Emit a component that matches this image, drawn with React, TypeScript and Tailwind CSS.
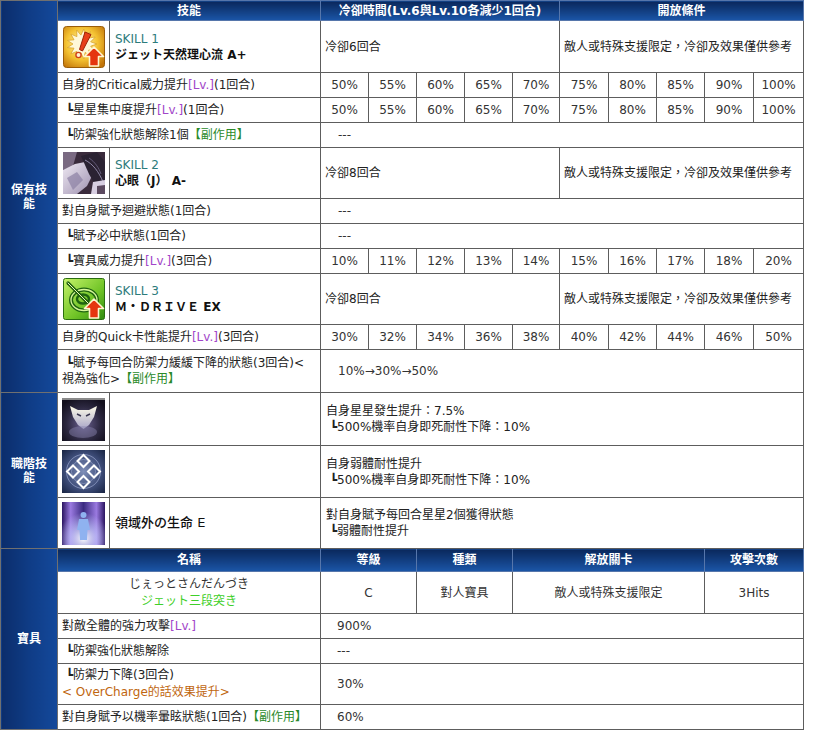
import React from "react";

const cell = "border border-[#5d5d5d] bg-white";
const hd =
  "border border-[#5676ab] bg-linear-to-b from-[#0a285c] to-[#1b56a8] text-white font-bold text-center";
const side =
  "border border-[#707070] bg-linear-to-r from-[#0b2d6b] via-[#0f3c86] to-[#14499b] text-white font-bold text-center leading-[14px]";

const Lv = () => <span className="text-[#a246c9]">[Lv.]</span>;
const Side = () => <span className="text-[#2a8a2a]">【副作用】</span>;

const burst = Array.from({ length: 26 }, (_, i) => {
  const a = (i / 26) * Math.PI * 2;
  const r = i % 2 ? 9 : 15;
  return `${(19 + r * Math.cos(a)).toFixed(1)},${(18 + r * Math.sin(a)).toFixed(1)}`;
}).join(" ");

const Arrow = () => (
  <polygon
    points="31,21 40.5,30.5 35.5,30.5 35.5,40 26.5,40 26.5,30.5 21.5,30.5"
    fill="#e5360f"
    stroke="#fff6d0"
    strokeWidth="1.6"
    strokeLinejoin="round"
  />
);

const Icon1 = () => (
  <svg width="42" height="42" viewBox="0 0 42 42">
    <defs>
      <radialGradient id="g1" cx="45%" cy="42%" r="70%">
        <stop offset="0" stopColor="#fff6b8" />
        <stop offset="0.55" stopColor="#f4c232" />
        <stop offset="1" stopColor="#c27408" />
      </radialGradient>
    </defs>
    <rect x="0.5" y="0.5" width="41" height="41" rx="3" fill="url(#g1)" stroke="#9a5c08" />
    <polygon points={burst} fill="#fff8d8" stroke="#d9a52a" strokeWidth="0.8" />
    <polygon points="22,6 28,8.5 19.5,25 16.5,23.5" fill="#e8401a" stroke="#9b2208" strokeWidth="1" />
    <circle cx="15.5" cy="29" r="2.6" fill="#fff0d0" stroke="#d0401a" strokeWidth="1.4" />
    <Arrow />
  </svg>
);

const Icon2 = () => (
  <svg width="42" height="42" viewBox="0 0 42 42">
    <defs>
      <linearGradient id="g2" x1="0" y1="0" x2="1" y2="1">
        <stop offset="0" stopColor="#efe9f3" />
        <stop offset="1" stopColor="#9c8fae" />
      </linearGradient>
    </defs>
    <rect width="42" height="42" fill="#3a2b3c" />
    <polygon points="0,0 14,0 10,14 0,18" fill="#7a6a82" />
    <polygon points="0,18 12,12 22,10 30,22 24,34 14,42 0,42" fill="url(#g2)" />
    <polygon points="4,26 14,20 20,28 10,38" fill="#8c80a4" opacity="0.7" />
    <polygon points="18,4 34,0 42,10 42,30 34,36 26,22" fill="#2a2232" />
    <path d="M22 8 C30 12 36 20 40 30" stroke="#8e86a6" strokeWidth="1" fill="none" />
    <path d="M26 6 C32 10 36 16 38 22" stroke="#6e6686" strokeWidth="0.8" fill="none" />
    <polygon points="30,30 42,28 42,42 28,42" fill="#d8cfe2" />
    <polygon points="34,34 42,33 42,42 34,42" fill="#5c4a60" />
  </svg>
);

const Icon3 = () => (
  <svg width="42" height="42" viewBox="0 0 42 42">
    <defs>
      <linearGradient id="g3" x1="0" y1="0" x2="1" y2="1">
        <stop offset="0" stopColor="#c6f36a" />
        <stop offset="0.6" stopColor="#6fc326" />
        <stop offset="1" stopColor="#2f8a10" />
      </linearGradient>
    </defs>
    <rect x="0.5" y="0.5" width="41" height="41" rx="2" fill="url(#g3)" stroke="#2a6e10" />
    <ellipse cx="21" cy="22" rx="13" ry="10.5" fill="none" stroke="#1f6410" strokeWidth="4" />
    <ellipse cx="21" cy="22" rx="13" ry="10.5" fill="none" stroke="#d8f79a" strokeWidth="1.3" />
    <ellipse cx="20" cy="21" rx="6" ry="4.5" fill="none" stroke="#1f6410" strokeWidth="2.5" />
    <line x1="5" y1="5" x2="25" y2="25" stroke="#215e0e" strokeWidth="3.2" strokeLinecap="round" />
    <line x1="5" y1="5" x2="25" y2="25" stroke="#e6ffb8" strokeWidth="1" strokeLinecap="round" />
    <Arrow />
  </svg>
);

const Class1 = () => (
  <svg width="43" height="43" viewBox="0 0 43 43">
    <defs>
      <radialGradient id="c1" cx="50%" cy="60%" r="65%">
        <stop offset="0" stopColor="#6a6090" />
        <stop offset="0.6" stopColor="#2c2840" />
        <stop offset="1" stopColor="#120f1c" />
      </radialGradient>
      <linearGradient id="c1b" x1="0" y1="0" x2="0" y2="1">
        <stop offset="0" stopColor="#fdfbe8" />
        <stop offset="1" stopColor="#a9a6c8" />
      </linearGradient>
    </defs>
    <rect width="43" height="43" fill="url(#c1)" />
    <rect width="43" height="2" fill="#8a8a8a" />
    <path d="M8 8 L16 12 L27 12 L35 8 L32 19 L27 27 L21.5 31 L16 27 L11 19 Z" fill="url(#c1b)" />
    <path d="M15 16 L19 18 M28 16 L24 18" stroke="#3a3650" strokeWidth="1.4" />
    <ellipse cx="21" cy="34" rx="14" ry="6" fill="#8a84b0" opacity="0.45" />
  </svg>
);

const Diamond = ({ x, y }: { x: number; y: number }) => (
  <polygon
    points={`${x},${y - 6} ${x + 6},${y} ${x},${y + 6} ${x - 6},${y}`}
    fill="none"
    stroke="#ffffff"
    strokeWidth="2"
  />
);

const Class2 = () => (
  <svg width="43" height="43" viewBox="0 0 43 43">
    <defs>
      <radialGradient id="c2" cx="50%" cy="50%" r="70%">
        <stop offset="0" stopColor="#7f8fb8" />
        <stop offset="0.6" stopColor="#3d4c78" />
        <stop offset="1" stopColor="#182442" />
      </radialGradient>
    </defs>
    <rect width="43" height="43" fill="url(#c2)" />
    <circle cx="21.5" cy="21.5" r="17" fill="none" stroke="#aab6dc" strokeWidth="1" opacity="0.6" />
    <circle cx="21.5" cy="21.5" r="12" fill="none" stroke="#aab6dc" strokeWidth="1" opacity="0.5" />
    <Diamond x={21.5} y={11} />
    <Diamond x={11} y={21.5} />
    <Diamond x={32} y={21.5} />
    <Diamond x={21.5} y={32} />
  </svg>
);

const Class3 = () => (
  <svg width="43" height="43" viewBox="0 0 43 43">
    <defs>
      <linearGradient id="c3" x1="0" y1="0" x2="1" y2="0">
        <stop offset="0" stopColor="#2a1460" />
        <stop offset="0.2" stopColor="#9a7ae0" />
        <stop offset="0.5" stopColor="#3a2a80" />
        <stop offset="0.8" stopColor="#9a7ae0" />
        <stop offset="1" stopColor="#2a1460" />
      </linearGradient>
      <radialGradient id="c3b" cx="50%" cy="85%" r="60%">
        <stop offset="0" stopColor="#ffffff" />
        <stop offset="0.5" stopColor="#c8d0ff" stopOpacity="0.6" />
        <stop offset="1" stopColor="#c8d0ff" stopOpacity="0" />
      </radialGradient>
    </defs>
    <rect width="43" height="43" fill="url(#c3)" />
    <rect width="43" height="43" fill="url(#c3b)" />
    <circle cx="21.5" cy="13" r="3" fill="#8fb2f0" />
    <path d="M17 17 L26 17 L28 28 L25.5 28 L25 38 L18 38 L17.5 28 L15 28 Z" fill="#8fb2f0" />
  </svg>
);

const Center = ({ children }: { children: React.ReactNode }) => (
  <div className="flex justify-center items-center">{children}</div>
);

function LvRow({ label, values }: { label: React.ReactNode; values: string[] }) {
  return (
    <tr className="h-[25px]">
      <td colSpan={2} className={cell + " px-[4px]"}>
        {label}
      </td>
      {values.map((v, i) => (
        <td key={i} className={cell + " text-center text-[#333]"}>
          {v}
        </td>
      ))}
    </tr>
  );
}

function DashRow({ label, value = "---", h = "h-[25px]" }: { label: React.ReactNode; value?: React.ReactNode; h?: string }) {
  return (
    <tr className={h}>
      <td colSpan={2} className={cell + " px-[4px] leading-[16px]"}>
        {label}
      </td>
      <td colSpan={10} className={cell + " pl-[17px] text-[#333]"}>
        {value}
      </td>
    </tr>
  );
}

function SkillRow({
  icon,
  n,
  name,
  cd,
  h,
}: {
  icon: React.ReactNode;
  n: number;
  name: React.ReactNode;
  cd: string;
  h: string;
}) {
  return (
    <tr className={h}>
      <td className={cell}>
        <Center>{icon}</Center>
      </td>
      <td className={cell + " px-[5px] leading-[16px]"}>
        <div className="text-[#2c7b7b]">SKILL {n}</div>
        <div className="font-bold text-[#111]">{name}</div>
      </td>
      <td colSpan={5} className={cell + " pl-[4px]"}>
        {cd}
      </td>
      <td colSpan={5} className={cell + " pl-[4px]"}>
        敵人或特殊支援限定，冷卻及效果僅供參考
      </td>
    </tr>
  );
}

export default function App() {
  const v1 = ["50%", "55%", "60%", "65%", "70%", "75%", "80%", "85%", "90%", "100%"];
  const v2 = ["10%", "11%", "12%", "13%", "14%", "15%", "16%", "17%", "18%", "20%"];
  const v3 = ["30%", "32%", "34%", "36%", "38%", "40%", "42%", "44%", "46%", "50%"];
  return (
    <div className="w-[813px] h-[735px] bg-white font-['DejaVu_Sans','Noto_Sans_CJK_TC',sans-serif] text-[12px] text-[#222]">
      <table className="border-collapse table-fixed w-[804px]">
        <colgroup>
          <col className="w-[57px]" />
          <col className="w-[52px]" />
          <col className="w-[211px]" />
          <col className="w-[48px]" />
          <col className="w-[48px]" />
          <col className="w-[48px]" />
          <col className="w-[48px]" />
          <col className="w-[47px]" />
          <col className="w-[49px]" />
          <col className="w-[48px]" />
          <col className="w-[48px]" />
          <col className="w-[49px]" />
          <col className="w-[50px]" />
        </colgroup>
        <tbody>
          <tr className="h-[20px]">
            <td rowSpan={12} className={side}>
              保有技
              <br />能
            </td>
            <td colSpan={2} className={hd}>
              技能
            </td>
            <td colSpan={5} className={hd}>
              冷卻時間(Lv.6與Lv.10各減少1回合)
            </td>
            <td colSpan={5} className={hd}>
              開放條件
            </td>
          </tr>
          <SkillRow h="h-[52px]" icon={<Icon1 />} n={1} name="ジェット天然理心流 A+" cd="冷卻6回合" />
          <LvRow
            label={
              <>
                自身的Critical威力提升<Lv />(1回合)
              </>
            }
            values={v1}
          />
          <LvRow
            label={
              <>
                {"\u00a0┗"}星星集中度提升<Lv />(1回合)
              </>
            }
            values={v1}
          />
          <DashRow
            label={
              <>
                {"\u00a0┗"}防禦強化狀態解除1個<Side />
              </>
            }
          />
          <SkillRow h="h-[51px]" icon={<Icon2 />} n={2} name="心眼（J） A-" cd="冷卻8回合" />
          <DashRow label="對自身賦予迴避狀態(1回合)" />
          <DashRow label={"\u00a0┗賦予必中狀態(1回合)"} />
          <LvRow
            label={
              <>
                {"\u00a0┗"}寶具威力提升<Lv />(3回合)
              </>
            }
            values={v2}
          />
          <SkillRow h="h-[51px]" icon={<Icon3 />} n={3} name="Ｍ・ＤＲＩＶＥ EX" cd="冷卻8回合" />
          <LvRow
            label={
              <>
                自身的Quick卡性能提升<Lv />(3回合)
              </>
            }
            values={v3}
          />
          <DashRow
            h="h-[43px]"
            label={
              <>
                {"\u00a0┗"}賦予每回合防禦力緩緩下降的狀態(3回合)&lt;
                <br />
                視為強化&gt;<Side />
              </>
            }
            value="10%→30%→50%"
          />

          <tr className="h-[53px]">
            <td rowSpan={3} className={side}>
              職階技
              <br />能
            </td>
            <td className={cell}>
              <Center>
                <Class1 />
              </Center>
            </td>
            <td className={cell}></td>
            <td colSpan={10} className={cell + " px-[5px] leading-[16px]"}>
              自身星星發生提升：7.5%
              <br />
              {"\u00a0┗"}500%機率自身即死耐性下降：10%
            </td>
          </tr>
          <tr className="h-[52px]">
            <td className={cell}>
              <Center>
                <Class2 />
              </Center>
            </td>
            <td className={cell}></td>
            <td colSpan={10} className={cell + " px-[5px] leading-[16px]"}>
              自身弱體耐性提升
              <br />
              {"\u00a0┗"}500%機率自身即死耐性下降：10%
            </td>
          </tr>
          <tr className="h-[51px]">
            <td className={cell}>
              <Center>
                <Class3 />
              </Center>
            </td>
            <td className={cell + " px-[5px] font-medium text-[13px] text-[#111]"}>領域外の生命 E</td>
            <td colSpan={10} className={cell + " px-[5px] leading-[16px]"}>
              對自身賦予每回合星星2個獲得狀態
              <br />
              {"\u00a0┗"}弱體耐性提升
            </td>
          </tr>

          <tr className="h-[23px]">
            <td rowSpan={6} className={side}>
              寶具
            </td>
            <td colSpan={2} className={hd}>
              名稱
            </td>
            <td colSpan={2} className={hd}>
              等級
            </td>
            <td colSpan={2} className={hd}>
              種類
            </td>
            <td colSpan={4} className={hd}>
              解放關卡
            </td>
            <td colSpan={2} className={hd}>
              攻擊次數
            </td>
          </tr>
          <tr className="h-[42px]">
            <td colSpan={2} className={cell + " text-center leading-[17px]"}>
              <div className="text-[#333]">じぇっとさんだんづき</div>
              <div className="text-[#3fcf2a]">ジェット三段突き</div>
            </td>
            <td colSpan={2} className={cell + " text-center text-[#333]"}>
              C
            </td>
            <td colSpan={2} className={cell + " text-center text-[#333]"}>
              對人寶具
            </td>
            <td colSpan={4} className={cell + " text-center text-[#333]"}>
              敵人或特殊支援限定
            </td>
            <td colSpan={2} className={cell + " text-center text-[#333]"}>
              3Hits
            </td>
          </tr>
          <tr className="h-[25px]">
            <td colSpan={2} className={cell + " px-[4px]"}>
              對敵全體的強力攻擊<Lv />
            </td>
            <td colSpan={10} className={cell + " pl-[16px] text-[#333]"}>
              900%
            </td>
          </tr>
          <tr className="h-[25px]">
            <td colSpan={2} className={cell + " px-[4px]"}>
              {"\u00a0┗"}防禦強化狀態解除
            </td>
            <td colSpan={10} className={cell + " pl-[16px] text-[#333]"}>
              ---
            </td>
          </tr>
          <tr className="h-[41px]">
            <td colSpan={2} className={cell + " px-[4px] leading-[17px]"}>
              {"\u00a0┗"}防禦力下降(3回合)
              <br />
              <span className="text-[#c0660f]">&lt; OverCharge的話效果提升&gt;</span>
            </td>
            <td colSpan={10} className={cell + " pl-[16px] text-[#333]"}>
              30%
            </td>
          </tr>
          <tr className="h-[25px]">
            <td colSpan={2} className={cell + " px-[4px]"}>
              對自身賦予以機率暈眩狀態(1回合)<Side />
            </td>
            <td colSpan={10} className={cell + " pl-[16px] text-[#333]"}>
              60%
            </td>
          </tr>
        </tbody>
      </table>
    </div>
  );
}
